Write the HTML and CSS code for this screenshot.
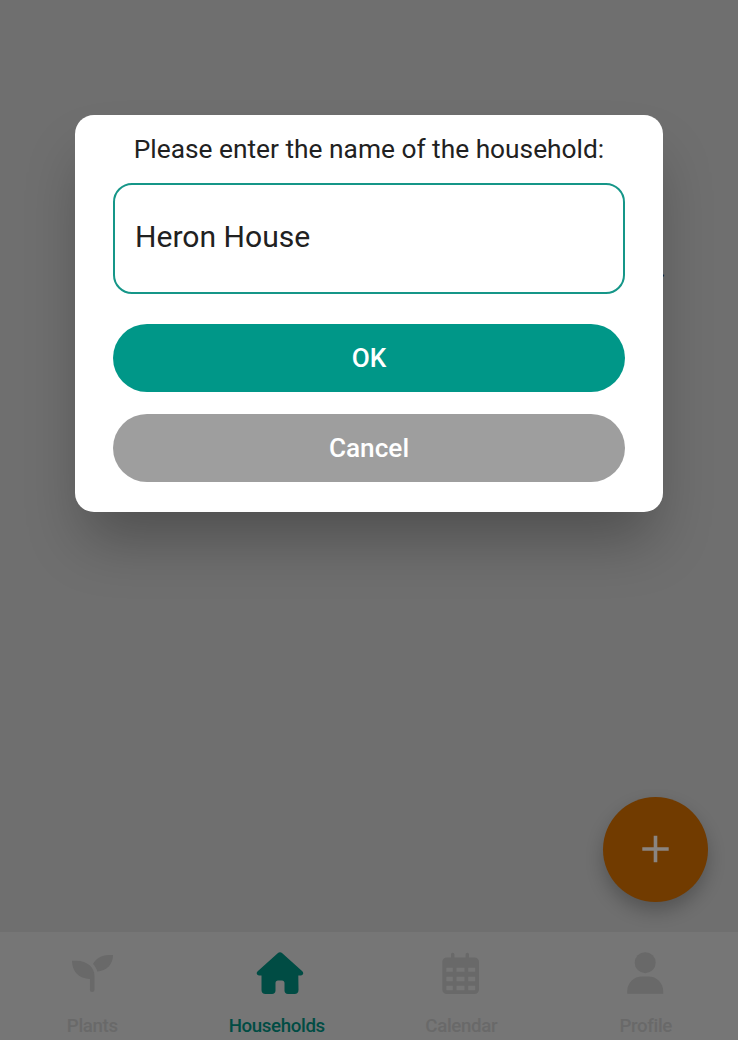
FILE: index.html
```html
<!DOCTYPE html>
<html lang="en">
<head>
<meta charset="utf-8">
<title>Households</title>
<link rel="stylesheet" href="styles.css">
</head>
<body>
<div class="screen">
  <main class="content">
    <span class="dot">.</span>
    <section class="dialog" role="dialog" aria-labelledby="prompt">
      <h1 class="prompt" id="prompt">Please enter the name of the household:</h1>
      <div class="field">Heron House</div>
      <button class="button ok">OK</button>
      <button class="button cancel">Cancel</button>
    </section>
    <button class="fab" aria-label="Add household">
      <svg width="28" height="28" viewBox="0 0 28 28"><path d="M13.500 .8v26.400M.3 14h26.400" stroke="#8a8581" stroke-width="3.600"/></svg>
    </button>
  </main>
  <nav class="tabs">
    <a class="tab">
      <svg class="icon" viewBox="0 0 48 44"><path d="M4 9.800h4.500c11 0 18 7 18 15v14a2.300 2.300 0 0 1-4.600 0V28C11 28 4 20.500 4 9.800z"/><path d="M45 4h-4.500c-7 0-12.500 3.500-15.500 9 2 2 3.500 4.500 4.300 7.500C38.500 20 45 13.500 45 4z"/></svg>
      <span>Plants</span>
    </a>
    <a class="tab active">
      <svg class="icon home" viewBox="0 0 48 44"><path d="M24 1.300c.8 0 1.500.3 2 .8L46.300 20.300c1.800 1.800.8 4.200-1.600 4.200h-2.400L42.500 39c0 2.500-1.500 4-4 4H32c-2.200 0-3.500-1.300-3.500-3.500V32c0-1.500-1-2.500-2.500-2.500h-4c-1.500 0-2.500 1-2.500 2.500v7.500c0 2.200-1.300 3.500-3.500 3.500H9.500c-2.500 0-4-1.500-4-4V24.500H3.200C.8 24.500-.2 22 1.700 20.300L22 2.100c.5-.5 1.200-.8 2-.8z"/></svg>
      <span>Households</span>
    </a>
    <a class="tab">
      <svg class="icon" viewBox="0 0 48 44"><path fill-rule="evenodd" d="M14 3.500a1.700 1.700 0 0 1 3.400 0v3h11.200v-3a1.700 1.700 0 0 1 3.400 0v3h5.300c2.800 0 4.700 1.800 4.700 4.500v27.500c0 2.700-1.900 4.500-4.700 4.500H10c-2.800 0-4.700-1.800-4.700-4.500V11c0-2.700 1.900-4.500 4.700-4.500h4zM9.300 16.800v4h6.500v-4zm10.200 0v4h8v-4zm11.700 0v4h7v-4zM9.300 25.800v4.400h6.500v-4.400zm10.200 0v4.400h8v-4.400zm11.700 0v4.400h7v-4.400zM9.300 34.800v3.500c0 .6.400 1 1 1h5.500v-4.500zm10.200 0v4.500h8v-4.500zm11.700 0v4.500h6c.6 0 1-.4 1-1v-3.500z"/></svg>
      <span>Calendar</span>
    </a>
    <a class="tab">
      <svg class="icon" viewBox="0 0 48 44"><circle cx="23.200" cy="11.700" r="10.500"/><path d="M5.200 42.800v-2.500c0-8.500 6.500-14.800 15-14.800h6c8.500 0 15 6.300 15 14.800v2.500z"/></svg>
      <span>Profile</span>
    </a>
  </nav>
</div>
</body>
</html>
```
FILE: styles.css
```css
* { box-sizing: border-box; }

body {
  margin: 0;
  font-family: Roboto, sans-serif;
}

.screen {
  display: flex;
  flex-direction: column;
  height: 1040px;
  overflow: hidden;
  background: #6f6f6f;
}

.content {
  position: relative;
  flex: 1;
  padding: 115.400px 75px 0;
}

.dialog {
  position: relative;
  display: flex;
  flex-direction: column;
  height: 397px;
  padding: 17.600px 38px 0;
  border-radius: 19px;
  background: #fff;
  box-shadow: 0 36px 58px -10px rgba(0, 0, 0, .29);
}

.prompt {
  margin: 0;
  font-size: 26.300px;
  font-weight: 400;
  line-height: 32px;
  color: #212121;
  text-align: center;
  white-space: nowrap;
}

.field {
  height: 111px;
  margin-top: 18px;
  padding: 0 20px 4px;
  border: 2px solid #159688;
  border-radius: 19px;
  font-size: 30.100px;
  line-height: 103px;
  color: #212121;
}

.button {
  height: 68px;
  padding: 0;
  border: 0;
  border-radius: 34px;
  font: 500 26.200px/68px Roboto, sans-serif;
  color: #fff;
}

.ok {
  margin-top: 30px;
  background: #009788;
}

.cancel {
  height: 67.500px;
  margin-top: 22.300px;
  line-height: 67px;
  background: #9e9e9e;
}

.dot {
  position: absolute;
  left: 659px;
  top: 253px;
  font-size: 26px;
  color: #111;
}

.fab {
  position: absolute;
  right: 30px;
  bottom: 30px;
  display: grid;
  place-items: center;
  width: 105px;
  height: 105.500px;
  padding: 0;
  border: 0;
  border-radius: 50%;
  background: #713b00;
  box-shadow: 0 9px 18px rgba(0, 0, 0, .24);
}

.tabs {
  display: flex;
  height: 108px;
  background: #767676;
}

.tab {
  display: flex;
  flex: 1;
  flex-direction: column;
  align-items: center;
  padding-top: 19px;
  font-size: 18.700px;
  font-weight: 500;
  line-height: 24px;
  letter-spacing: -.36px;
  color: #696969;
}

.tab span { margin-top: 19px; }

.icon {
  width: 48px;
  height: 44px;
  fill: currentColor;
}

.home { margin-left: 7px; }

.active { color: #004c44; }
```
